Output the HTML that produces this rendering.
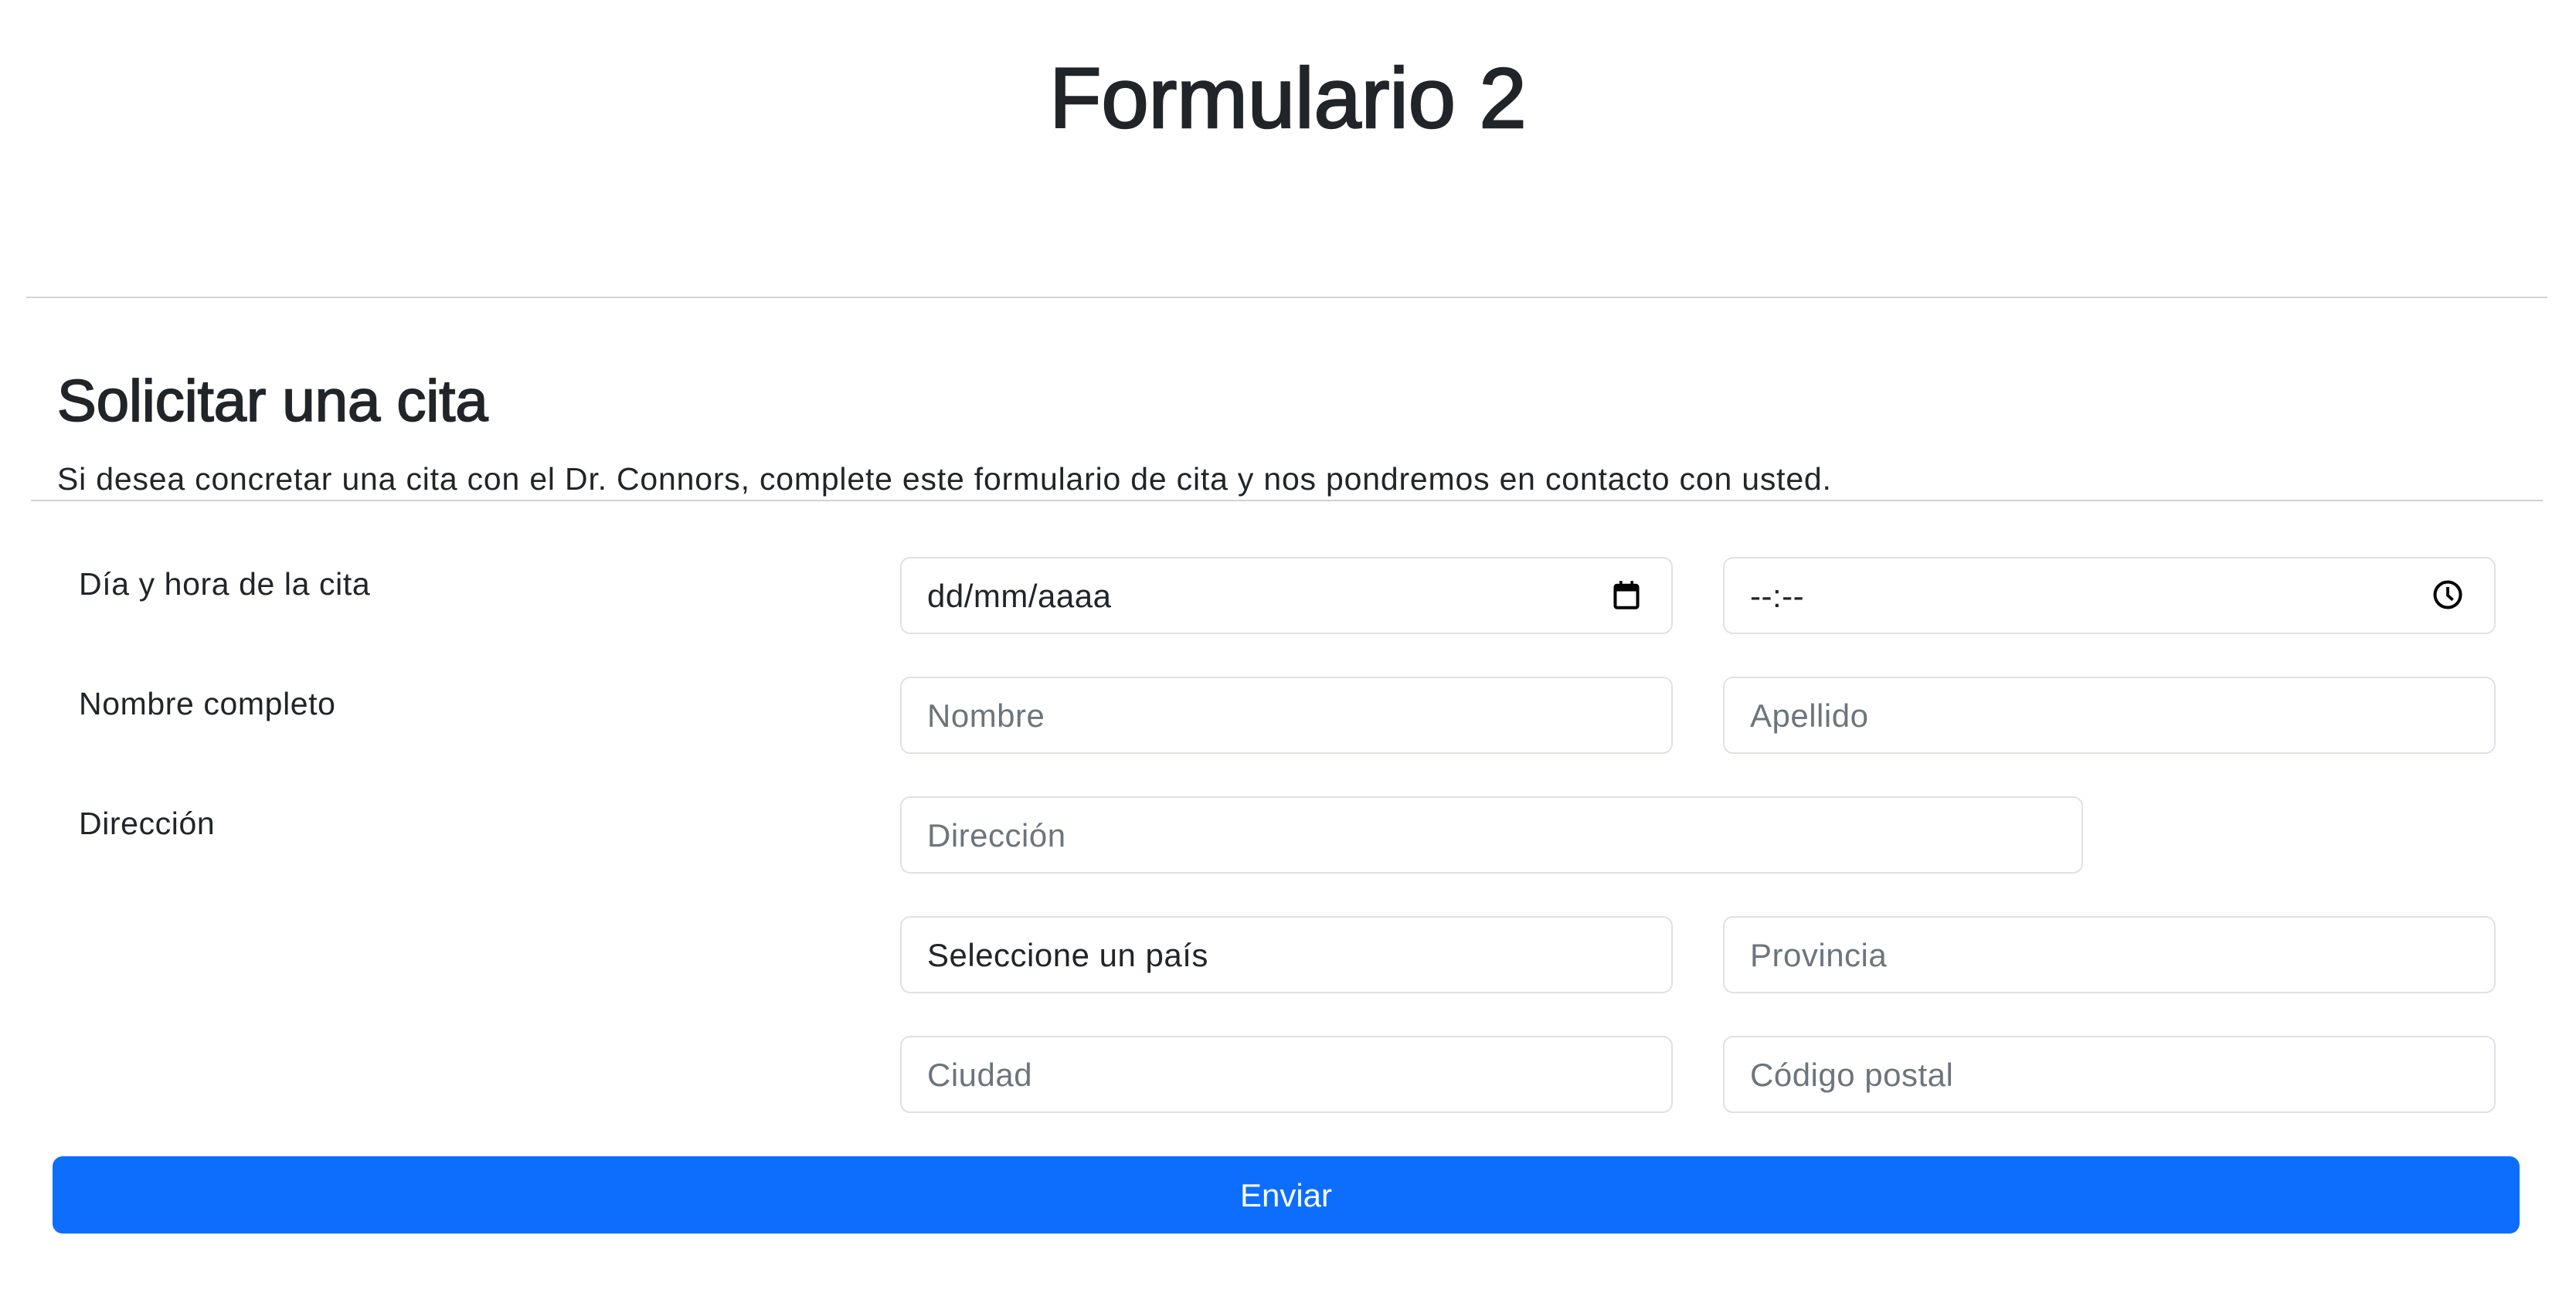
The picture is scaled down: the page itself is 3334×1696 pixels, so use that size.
<!DOCTYPE html>
<html><head><meta charset="utf-8"><style>
*{box-sizing:border-box;margin:0;padding:0}
body{width:3334px;height:1696px;background:#fff;font-family:"Liberation Sans",sans-serif;color:#212529;position:relative;overflow:hidden}
.a{position:absolute}
h1{position:absolute;left:0;width:3334px;text-align:center;top:58px;font-size:110px;font-weight:400;line-height:140px;-webkit-text-stroke:2.5px #212529}
.hr{position:absolute;height:2px;background:#d0d3d6}
h2{position:absolute;left:74px;top:470px;font-size:76px;font-weight:400;line-height:100px;-webkit-text-stroke:1.8px #212529}
p{position:absolute;left:74px;top:590px;font-size:41px;line-height:60px;letter-spacing:0.8px}
.lbl{position:absolute;left:102px;font-size:41px;line-height:60px;letter-spacing:0.6px}
.in{position:absolute;height:100px;border:2px solid #dee2e6;border-radius:13px;font-size:42px;line-height:98px;padding-left:33px;color:#6c757d;letter-spacing:0.5px}
.in.d{color:#212529}
.c1{left:1165px;width:1000px}.c2{left:2230px;width:1000px}
.btn{position:absolute;left:68px;top:1497px;width:3193px;height:100px;background:#0d6efd;border-radius:13px;color:#fff;font-size:42px;line-height:102px;text-align:center}
</style></head><body>
<h1>Formulario 2</h1>
<div class="hr" style="left:34px;width:3263px;top:384px"></div>
<h2>Solicitar una cita</h2>
<p>Si desea concretar una cita con el Dr. Connors, complete este formulario de cita y nos pondremos en contacto con usted.</p>
<div class="hr" style="left:40px;width:3251px;top:647px"></div>
<div class="lbl" style="top:726px">Día y hora de la cita</div>
<div class="lbl" style="top:881px">Nombre completo</div>
<div class="lbl" style="top:1036px">Dirección</div>
<div class="in d c1" style="top:721px">dd/mm/aaaa
<svg class="a" style="left:920px;top:28px" width="36" height="38" viewBox="0 0 16 17"><rect x="1.5" y="3" width="13" height="13" rx="1" fill="none" stroke="#000" stroke-width="1.8"/><rect x="1.5" y="3" width="13" height="3.5" fill="#000"/><rect x="4" y="0.5" width="1.6" height="3" fill="#000"/><rect x="10.4" y="0.5" width="1.6" height="3" fill="#000"/></svg></div>
<div class="in d c2" style="top:721px">--:--
<svg class="a" style="left:916px;top:27px" width="40" height="40" viewBox="0 0 16 16"><circle cx="8" cy="8" r="6.6" fill="none" stroke="#000" stroke-width="1.6"/><path d="M8 4v4.3l2.6 2.4" fill="none" stroke="#000" stroke-width="1.5"/></svg></div>
<div class="in c1" style="top:876px">Nombre</div>
<div class="in c2" style="top:876px">Apellido</div>
<div class="in" style="top:1031px;left:1165px;width:1531px">Dirección</div>
<div class="in d c1" style="top:1186px">Seleccione un país</div>
<div class="in c2" style="top:1186px">Provincia</div>
<div class="in c1" style="top:1341px">Ciudad</div>
<div class="in c2" style="top:1341px">Código postal</div>
<div class="btn">Enviar</div>
</body></html>
